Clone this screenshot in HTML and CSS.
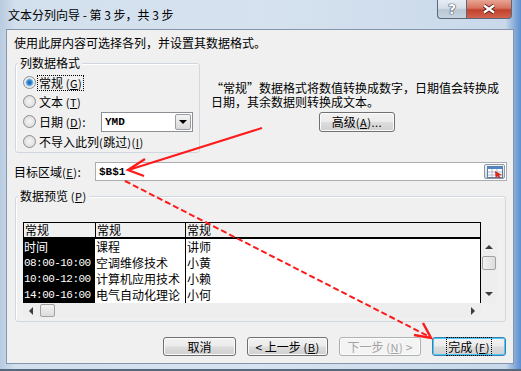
FILE: index.html
```html
<!DOCTYPE html>
<html lang="zh-CN">
<head>
    <meta charset="UTF-8">
    <title>文本分列向导</title>
    <link rel="stylesheet" href="styles.css">
</head>
<body>
    <div class="window">
        <div class="titlebar">
            <span class="title">文本分列向导 - 第 3 步，共 3 步</span>
            <div class="caption">
                <span class="cap-btn help">?</span>
                <span class="cap-btn close">
                    <svg width="14" height="10" viewBox="0 0 14 10">
                        <path d="M2 1.5L12 8.5M12 1.5L2 8.5" stroke="#5b2121" stroke-width="4"/>
                        <path d="M2 1.5L12 8.5M12 1.5L2 8.5" stroke="#fff" stroke-width="2.2"/>
                    </svg>
                </span>
            </div>
        </div>

        <div class="client">
            <p class="intro">使用此屏内容可选择各列，并设置其数据格式。</p>

            <div class="upper">
                <div class="group format">
                    <div class="group-title">列数据格式</div>
                    <div class="opt first"><span class="radio on"></span><span class="focus">常规 <span class="acc">(<u>G</u>)</span></span></div>
                    <div class="opt"><span class="radio"></span><span class="lbl">文本 <span class="acc">(<u>T</u>)</span></span></div>
                    <div class="opt date">
                        <span class="radio"></span><span class="lbl">日期 <span class="acc">(<u>D</u>)</span>:</span>
                        <span class="combo"><span class="combo-text">YMD</span><span class="combo-btn"><i class="tri-down"></i></span></span>
                    </div>
                    <div class="opt"><span class="radio"></span><span class="lbl">不导入此列<span class="acc">(</span>跳过<span class="acc">)(<u>I</u>)</span></span></div>
                </div>
                <div class="info">
                    <p class="desc">“常规”数据格式将数值转换成数字，日期值会转换成<br>日期，其余数据则转换成文本。</p>
                    <button class="btn adv">高级<span class="acc">(<u>A</u>)...</span></button>
                </div>
            </div>

            <div class="target">
                <span class="target-label">目标区域<span class="acc">(<u>E</u>)</span>:</span>
                <div class="field">
                    <span class="field-text">$B$1</span>
                    <span class="ref-btn">
                        <svg width="16" height="12" viewBox="0 0 16 12">
                            <rect x="0.5" y="0.5" width="15" height="11" fill="#fff" stroke="#5d7ea6"/>
                            <rect x="1" y="1" width="14" height="2" fill="#4f86c6"/>
                            <path d="M1 6h14M1 9h14M5 3v8M10 3v8" stroke="#a7bcd6"/>
                            <path d="M8 5l7 4-3 .4 1.6 2.2-1.4.9-1.6-2.3-2 1.8z" fill="#d8281a"/>
                        </svg>
                    </span>
                </div>
            </div>

            <div class="group preview">
                <div class="group-title">数据预览 <span class="acc">(<u>P</u>)</span></div>
                <div class="grid-wrap">
                    <div class="grid-head">
                        <span class="hcell">常规</span>
                        <span class="hcell">常规</span>
                        <span class="hcell last">常规</span>
                    </div>
                    <div class="grid-body">
                        <span class="cell sel">时间</span><span class="cell mid">课程</span><span class="cell">讲师</span>
                        <span class="cell sel num">08:00-10:00</span><span class="cell mid">空调维修技术</span><span class="cell">小黄</span>
                        <span class="cell sel num">10:00-12:00</span><span class="cell mid">计算机应用技术</span><span class="cell">小赖</span>
                        <span class="cell sel num">14:00-16:00</span><span class="cell mid">电气自动化理论</span><span class="cell">小何</span>
                    </div>
                    <div class="vscroll">
                        <i class="tri-up"></i>
                        <span class="thumb vthumb"></span>
                        <i class="tri-down small"></i>
                    </div>
                    <div class="hscroll">
                        <i class="tri-left"></i>
                        <span class="thumb hthumb"></span>
                        <i class="tri-right"></i>
                    </div>
                    <div class="corner"></div>
                </div>
            </div>

            <div class="buttons">
                <button class="btn cancel">取消</button>
                <button class="btn back">&lt; 上一步 <span class="acc">(<u>B</u>)</span></button>
                <button class="btn next" disabled>下一步 <span class="acc">(<u>N</u>)</span> &gt;</button>
                <button class="btn finish"><span class="focus">完成 <span class="acc">(<u>F</u>)</span></span></button>
            </div>
        </div>

        <!-- annotation arrows drawn over the dialog -->
        <svg class="marks" width="521" height="371" viewBox="0 0 521 371">
            <path d="M262 128L130 169.5" stroke="#ff1a1a" stroke-width="2" fill="none"/>
            <path d="M145 159L128 170L144 176" stroke="#ff1a1a" stroke-width="2.4" fill="none"/>
            <path d="M125 181L428 336" stroke="#ff1a1a" stroke-width="2" stroke-dasharray="6 3" fill="none"/>
            <path d="M414 335L431 338L423 323" stroke="#ff1a1a" stroke-width="2.4" fill="none"/>
        </svg>
    </div>
</body>
</html>
```

FILE: styles.css
```css
*{
    margin: 0;
    padding: 0;
    box-sizing: border-box;
}
body{
    font-family: "Noto Sans CJK SC", "Noto Sans", sans-serif;
    font-size: 12px;
    color: #000;
    background: #c9d8e9;
}
u{
    text-decoration: underline;
}
.acc{
    font-size: 11px;
    letter-spacing: 0.5px;
}
.window{
    position: relative;
    width: 521px;
    height: 371px;
    display: flex;
    flex-direction: column;
    padding: 0 7px 5px 6px;
    background: linear-gradient(90deg, #b9cbe0 0, #d2dfed 3%, #d6e2ef 50%, #c9d9ea 97%, #7fa6d6 99%, #5b8fcf 100%);
    border-bottom: 2px solid #56687c;
}
.titlebar{
    height: 29px;
    display: flex;
    justify-content: space-between;
    align-items: flex-start;
}
.title{
    padding: 8px 0 0 2px;
    line-height: 14px;
    color: #000;
}
.caption{
    display: flex;
    margin-right: 2px;
}
.cap-btn{
    height: 19px;
    display: flex;
    justify-content: center;
    align-items: center;
    border: 1px solid #5a6879;
    border-top: none;
}
.help{
    width: 29px;
    border-right: none;
    border-radius: 0 0 0 4px;
    background: linear-gradient(#e6ecf3 0, #d6dfe9 45%, #b9c6d4 55%, #c7d3df 100%);
    color: #fff;
    font: bold 14px "DejaVu Sans", sans-serif;
    text-shadow: 0 0 1px #2c3a48, 0 0 1px #2c3a48, 0 0 1px #2c3a48;
}
.close{
    width: 46px;
    border-radius: 0 0 4px 0;
    background: linear-gradient(#e8a493 0, #d7735f 45%, #c2412d 55%, #d1634d 100%);
}
.client{
    flex: 1;
    display: flex;
    flex-direction: column;
    background: #f0f0f0;
    border: 1px solid #8396ab;
}
.intro{
    padding: 6px 0 0 7px;
    line-height: 14px;
}
.upper{
    display: flex;
    margin-top: 13px;
    height: 90px;
}
.group{
    border: 1px solid #d0d7de;
    border-radius: 3px;
    box-shadow: inset 1px 1px 0 #fff;
}
.group-title{
    width: max-content;
    margin: -8px 0 0 2px;
    padding: 0 2px;
    line-height: 14px;
    background: #f0f0f0;
}
.format{
    width: 185px;
    height: 90px;
    margin-left: 8px;
}
.opt{
    display: flex;
    align-items: center;
    height: 19px;
    padding: 0 6px 0 7px;
    line-height: 14px;
}
.opt.first{
    margin-top: 3px;
}
.opt.date{
    height: 21px;
}
.radio{
    width: 13px;
    height: 13px;
    border-radius: 50%;
    border: 1px solid #8a8f94;
    background: radial-gradient(circle, #f6f6f6 0, #e2e2e2 60%, #cfcfcf 100%);
    margin-right: 2px;
}
.radio.on{
    background: radial-gradient(circle, #1c5fa9 0, #3b8fd6 2.5px, #8cc3ec 3.5px, #f3f3f3 4.5px, #dadada 100%);
}
.lbl{
    padding-left: 1px;
}
.focus{
    outline: 1px dotted #000;
    padding: 0 1px;
}
.combo{
    margin-left: auto;
    width: 92px;
    height: 20px;
    display: flex;
    background: #fff;
    border: 1px solid #8c8f94;
}
.combo-text{
    flex: 1;
    padding-left: 3px;
    font: bold 11px "Liberation Mono", monospace;
    line-height: 18px;
}
.combo-btn{
    width: 16px;
    margin: 1px;
    display: flex;
    justify-content: center;
    align-items: center;
    border: 1px solid #9a9ea3;
    border-radius: 2px;
    background: linear-gradient(#f3f3f3, #d9d9d9);
}
.tri-down{
    width: 0;
    height: 0;
    border-left: 4px solid transparent;
    border-right: 4px solid transparent;
    border-top: 4px solid #000;
}
.tri-down.small{
    border-top-color: #3c3c3c;
    margin-top: auto;
    margin-bottom: 7px;
}
.tri-up{
    width: 0;
    height: 0;
    border-left: 4px solid transparent;
    border-right: 4px solid transparent;
    border-bottom: 4px solid #3c3c3c;
}
.tri-left{
    width: 0;
    height: 0;
    border-top: 4px solid transparent;
    border-bottom: 4px solid transparent;
    border-right: 4px solid #3c3c3c;
}
.tri-right{
    width: 0;
    height: 0;
    border-top: 4px solid transparent;
    border-bottom: 4px solid transparent;
    border-left: 4px solid #3c3c3c;
    margin-left: auto;
    margin-right: 6px;
}
.info{
    width: 290px;
    margin-left: 11px;
    padding-top: 18px;
}
.desc{
    line-height: 14px;
    white-space: nowrap;
}
.btn{
    height: 19px;
    font-family: inherit;
    font-size: 12px;
    line-height: 16px;
    color: #000;
    border: 1px solid #707070;
    border-radius: 3px;
    background: linear-gradient(#f2f2f2 0, #ebebeb 48%, #dddddd 52%, #cfcfcf 100%);
    box-shadow: inset 0 0 0 1px #fbfbfb;
}
.adv{
    display: block;
    width: 76px;
    height: 20px;
    margin: 3px 0 0 108px;
}
.target{
    display: flex;
    align-items: center;
    height: 19px;
    margin-top: 9px;
    padding-left: 7px;
}
.target-label{
    width: 81px;
    line-height: 14px;
}
.field{
    width: 412px;
    height: 19px;
    display: flex;
    align-items: center;
    padding-left: 3px;
    background: #fff;
    border: 1px solid #abadb3;
}
.field-text{
    font: bold 11px "Liberation Mono", monospace;
}
.ref-btn{
    margin-left: auto;
    margin-right: 1px;
    width: 21px;
    height: 15px;
    display: flex;
    justify-content: center;
    align-items: center;
    border: 1px solid #8b98a8;
    border-radius: 2px;
    background: linear-gradient(#f4f4f4, #d8d8d8);
}
.preview{
    width: 491px;
    height: 126px;
    margin: 15px 0 0 8px;
}
.grid-wrap{
    display: grid;
    grid-template-columns: 458px 16px;
    grid-template-rows: 17px 64px 15px;
    margin: 19px 0 0 7px;
}
.grid-head{
    grid-column: 1;
    grid-row: 1;
    display: grid;
    grid-template-columns: 72px 90px 1fr;
    background: #f0f0f0;
    border: 1px solid #000;
    border-bottom-width: 2px;
}
.hcell{
    line-height: 14px;
    padding-left: 1px;
    border-right: 1px solid #000;
}
.hcell.last{
    border-right: none;
}
.grid-body{
    grid-column: 1;
    grid-row: 2;
    display: grid;
    grid-template-columns: 72px 91px 1fr;
    grid-auto-rows: 16px;
    background: #fff;
    border-right: 1px solid #000;
    overflow: hidden;
}
.cell{
    line-height: 16px;
    padding-left: 1px;
    white-space: nowrap;
    overflow: hidden;
}
.cell.mid{
    border-right: 1px solid #000;
}
.cell.sel{
    background: #000;
    color: #fff;
}
.cell.num{
    font-family: "Liberation Mono", monospace;
    font-size: 11px;
    letter-spacing: -0.55px;
}
.vscroll{
    grid-column: 2;
    grid-row: 2;
    display: flex;
    flex-direction: column;
    align-items: center;
    padding-top: 6px;
    background: #eeeeee;
}
.thumb{
    border: 1px solid #a2a2a2;
    border-radius: 2px;
    background: linear-gradient(90deg, #f3f3f3, #dcdcdc);
}
.vthumb{
    width: 14px;
    height: 14px;
    margin-top: 7px;
}
.hscroll{
    grid-column: 1;
    grid-row: 3;
    display: flex;
    align-items: center;
    padding-left: 6px;
    background: #eeeeee;
}
.hthumb{
    width: 15px;
    height: 13px;
    margin-left: 7px;
    background: linear-gradient(#f3f3f3, #dcdcdc);
}
.corner{
    grid-column: 2;
    grid-row: 3;
    background: #f0f0f0;
}
.buttons{
    display: flex;
    justify-content: flex-end;
    gap: 11px;
    margin-top: 15px;
    padding-right: 7px;
}
.cancel{
    width: 73px;
}
.back{
    width: 81px;
}
.next{
    width: 82px;
    color: #a3a3a3;
    border-color: #adb2b5;
    background: #f4f4f4;
}
.finish{
    width: 74px;
    border-color: #3c7fb1;
    box-shadow: inset 0 0 0 1px #48c9f6;
}
.marks{
    position: absolute;
    left: 0;
    top: 0;
    pointer-events: none;
}
```
